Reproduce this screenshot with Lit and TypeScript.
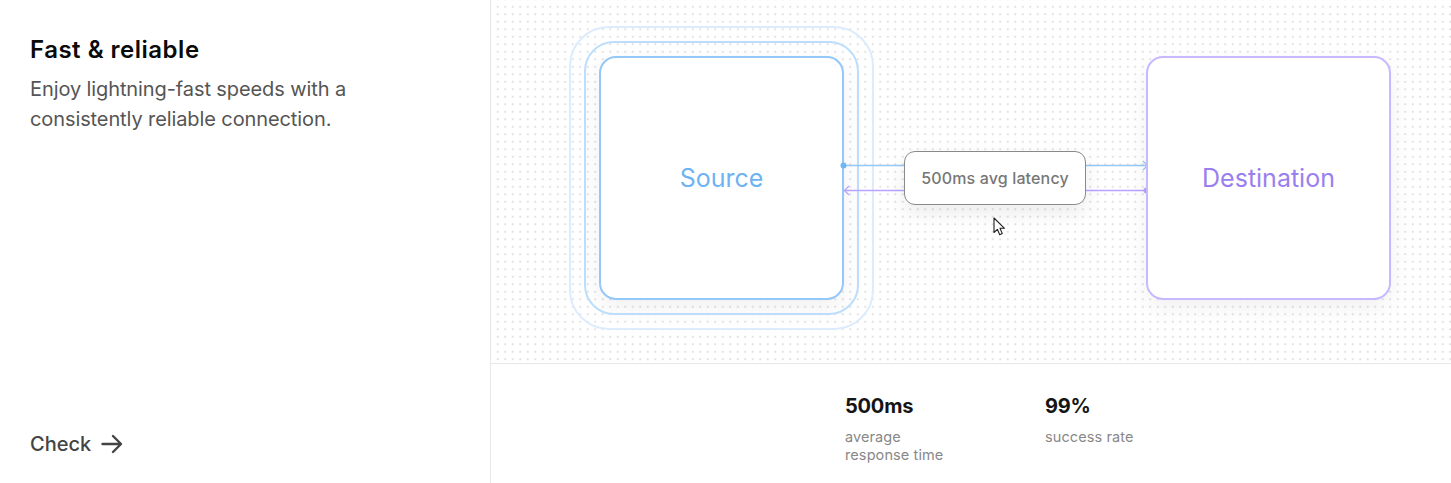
import { LitElement, html, css, svg } from "lit";
import { customElement } from "lit/decorators.js";

@customElement("app-root")
export class AppRoot extends LitElement {
  static styles = css`
    :host { display: grid; grid-template-columns: 491px 960px; height: 483px; width: 1451px; overflow: hidden; background: #fff; font-family: Inter, "Noto Sans", sans-serif; }
    * { box-sizing: border-box; }
    .left { border-right: 1px solid #e8e8e8; padding: 34px 30px 25px; display: flex; flex-direction: column; justify-content: space-between; }
    h2 { margin: 0; font-size: 24px; line-height: 32px; font-weight: 600; color: #0a0a0a; letter-spacing: 0.5px; }
    p { margin: 8px 0 0; font-size: 20px; line-height: 30px; color: #555; width: 330px; letter-spacing: -0.1px; }
    .check { display: flex; align-items: center; gap: 9px; font-size: 20px; line-height: 28px; font-weight: 500; color: #444; }
    .check svg { width: 24px; height: 24px; display: block; }
    .right { display: flex; flex-direction: column; }
    .canvas { position: relative; height: 364px; border-bottom: 1px solid #e8e8e8; background-color: #fff; background-image: radial-gradient(circle, #e2e2e2 0.9px, transparent 1.5px); background-size: 7.5px 7.5px; background-position: 3px 3px; padding: 56px 0 0 108px; display: flex; align-items: flex-start; }
    .node { position: relative; width: 245px; height: 244px; border-radius: 17px; background: #fff; border: 2px solid; display: flex; align-items: center; justify-content: center; font-size: 25px; box-shadow: 0 8px 24px rgba(0,0,0,0.06); }
    .source { border-color: #93c8f8; color: #6db3f2; }
    .dest { border-color: #c8b8ff; color: #9a80ee; }
    .ring { position: absolute; border-style: solid; pointer-events: none; }
    .r1 { inset: -17px; border-radius: 30px; border-width: 2px; border-color: #bcdefc; }
    .r2 { inset: -32px; border-radius: 40px; border-width: 2px; border-color: #dcecfd; }
    .link { position: relative; width: 302px; height: 244px; flex: none; display: flex; justify-content: center; padding-top: 95px; }
    .wires { position: absolute; left: -4px; top: 0; width: 312px; height: 243px; overflow: visible; }
    .pill { position: relative; width: 182px; height: 54px; border-radius: 11px; background: #fff; border: 1.5px solid #8a8a8a; color: #777; font-size: 16px; font-weight: 500; letter-spacing: 0.15px; display: flex; align-items: center; justify-content: center; box-shadow: 0 8px 20px rgba(0,0,0,0.08); }
    .cursor { position: absolute; left: 502px; top: 217px; width: 14px; height: 20px; }
    .stats { flex: 1; display: flex; padding: 28px 0 0 354px; gap: 0; }
    .stat { width: 200px; }
    .num { font-size: 20px; line-height: 28px; font-weight: 700; color: #151515; letter-spacing: -0.2px; }
    .lab { margin-top: 8px; font-size: 14.5px; line-height: 18px; color: #888; letter-spacing: 0.1px; }
  `;

  render() {
    return html`
      <section class="left">
        <div>
          <h2>Fast &amp; reliable</h2>
          <p>Enjoy lightning-fast speeds with a consistently reliable connection.</p>
        </div>
        <div class="check">Check
          <svg viewBox="0 0 24 24" fill="none" stroke="#444" stroke-width="2.4" stroke-linecap="round" stroke-linejoin="round"><path d="M2.5 12h18M13 4l8 8-8 8"/></svg>
        </div>
      </section>
      <section class="right">
        <div class="canvas">
          <div class="node source"><span class="ring r1"></span><span class="ring r2"></span>Source</div>
          <div class="link">
            <svg class="wires" viewBox="0 0 312 243" fill="none">
              ${svg`<path d="M4 109.5H308" stroke="#93c8f8" stroke-width="1.5"/>
              <path d="M303 105l4.5 4.5-4.5 4.5" stroke="#8ec5f7" stroke-width="1.2"/>
              <circle cx="3.5" cy="109.5" r="3" fill="#6fb6f5"/>
              <path d="M4 134.5H308" stroke="#b7a3ff" stroke-width="1.5"/>
              <path d="M9 130L4.5 134.5l4.5 4.5" stroke="#b7a3ff" stroke-width="1.2"/>
              <circle cx="306.5" cy="134.5" r="3" fill="#b7a3ff"/>`}
            </svg>
            <div class="pill">500ms avg latency</div>
          </div>
          <div class="node dest">Destination</div>
          <svg class="cursor" viewBox="0 0 14 20"><path d="M1 1v14.5l3.4-3.2 2.3 5.4 2.6-1.1-2.3-5.3H11.5z" fill="#fff" stroke="#222" stroke-width="1.1" stroke-linejoin="round"/></svg>
        </div>
        <div class="stats">
          <div class="stat"><div class="num">500ms</div><div class="lab">average<br />response time</div></div>
          <div class="stat"><div class="num">99%</div><div class="lab">success rate</div></div>
        </div>
      </section>
    `;
  }
}
